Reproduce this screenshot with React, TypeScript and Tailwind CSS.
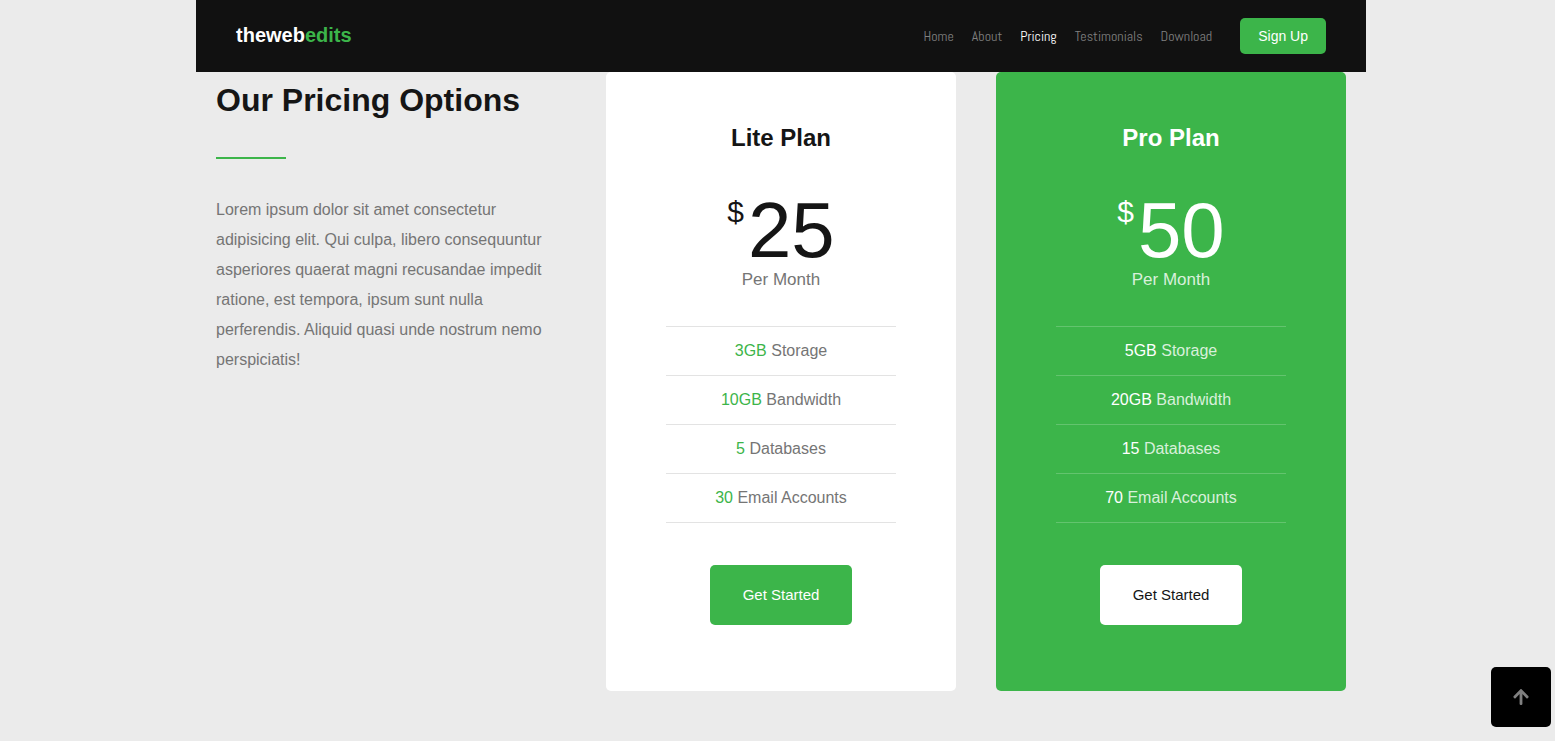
import { FaArrowUp } from "react-icons/fa";

type Plan = {
  name: string;
  price: number;
  features: [string, string][];
  featured: boolean;
};

const links = ["Home", "About", "Pricing", "Testimonials", "Download"];

const plans: Plan[] = [
  {
    name: "Lite Plan",
    price: 25,
    features: [
      ["3GB", "Storage"],
      ["10GB", "Bandwidth"],
      ["5", "Databases"],
      ["30", "Email Accounts"],
    ],
    featured: false,
  },
  {
    name: "Pro Plan",
    price: 50,
    features: [
      ["5GB", "Storage"],
      ["20GB", "Bandwidth"],
      ["15", "Databases"],
      ["70", "Email Accounts"],
    ],
    featured: true,
  },
];

function Header() {
  return (
    <header className="flex items-center justify-between bg-[#111111] px-10 py-[18px]">
      <a href="#home" className="pb-0.5 text-xl leading-8 font-bold text-white">
        theweb<span className="text-[#3cb54a]">edits</span>
      </a>
      <div className="flex items-center gap-7">
        <nav className="flex gap-[18px] font-['Abel','Liberation_Sans_Narrow','Roboto_Condensed',sans-serif] text-sm">
          {links.map((link) => (
            <a
              key={link}
              href={`#${link.toLowerCase()}`}
              className={link === "Pricing" ? "text-white" : "text-[#808080]"}
            >
              {link}
            </a>
          ))}
        </nav>
        <button className="h-9 rounded-[5px] bg-[#3cb54a] px-[18px] text-sm text-white">
          Sign Up
        </button>
      </div>
    </header>
  );
}

function PlanCard({ plan }: { plan: Plan }) {
  const { featured } = plan;
  return (
    <article
      className={`rounded-[5px] px-15 pt-12 pb-[66px] text-center ${
        featured ? "bg-[#3cb54a] text-white" : "bg-white text-[#151515]"
      }`}
    >
      <h3 className="text-2xl leading-9 font-bold">{plan.name}</h3>
      <p className="mt-10 flex justify-center gap-1 text-[78px] leading-[69px]">
        <span className="text-[30px] leading-8">$</span>
        {plan.price}
      </p>
      <p className={`text-[17px] leading-[30px] ${featured ? "text-[#d8f0db]" : "text-[#757575]"}`}>
        Per Month
      </p>
      <ul
        className={`mt-[31px] border-t ${
          featured ? "border-[#63c46e] text-[#d8f0db]" : "border-[#e3e3e3] text-[#757575]"
        }`}
      >
        {plan.features.map(([amount, label]) => (
          <li
            key={label}
            className={`border-b leading-[48px] ${featured ? "border-[#63c46e]" : "border-[#e3e3e3]"}`}
          >
            <span className={featured ? "text-white" : "text-[#3cb54a]"}>{amount}</span> {label}
          </li>
        ))}
      </ul>
      <button
        className={`mt-[42px] h-15 rounded-[5px] px-[33px] text-[15px] ${
          featured ? "bg-white text-[#151515]" : "bg-[#3cb54a] text-white"
        }`}
      >
        Get Started
      </button>
    </article>
  );
}

export default function App() {
  return (
    <div className="min-h-screen bg-[#ebebeb] pl-[7px] font-['Liberation_Sans',Arial,sans-serif] text-base">
      <div className="mx-auto max-w-[1170px]">
        <Header />
        <main className="grid grid-cols-1 gap-10 px-5 md:grid-cols-3">
          <section>
            <h2 className="mt-2 text-[32px] leading-10 font-bold whitespace-nowrap text-[#151515]">
              Our Pricing Options
            </h2>
            <div className="mt-[37px] h-0.5 w-[70px] bg-[#3cb54a]" />
            <p className="mt-9 leading-[30px] text-[#757575]">
              Lorem ipsum dolor sit amet consectetur adipisicing elit. Qui culpa, libero consequuntur
              asperiores quaerat magni recusandae impedit ratione, est tempora, ipsum sunt nulla
              perferendis. Aliquid quasi unde nostrum nemo perspiciatis!
            </p>
          </section>
          {plans.map((plan) => (
            <PlanCard key={plan.name} plan={plan} />
          ))}
        </main>
      </div>
      <a
        href="#home"
        aria-label="Back to top"
        className="fixed right-1 bottom-3.5 flex size-15 items-center justify-center rounded-[5px] bg-black text-[#808080]"
      >
        <FaArrowUp size={18} />
      </a>
    </div>
  );
}
